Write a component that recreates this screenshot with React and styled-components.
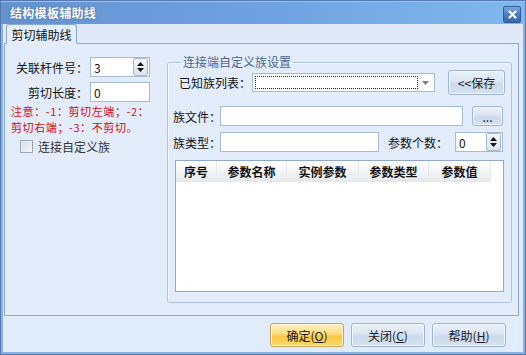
import React from 'react'
import styled, { createGlobalStyle } from 'styled-components'

const GlobalStyle = createGlobalStyle`
  html, body {
    margin: 0;
    padding: 0;
    background: #ffffff;
  }
  body {
    font-family: "Noto Sans CJK SC", "Liberation Sans", sans-serif;
    font-size: 12px;
    color: #111;
  }
`

const Window = styled.div`
  width: 526px;
  height: 355px;
  box-sizing: border-box;
  display: flex;
  flex-direction: column;
  border: 1px solid #5478b0;
  background: #dfe9f8;
`

const TitleBar = styled.div`
  height: 23px;
  display: flex;
  align-items: center;
  justify-content: space-between;
  padding: 0 4px 0 9px;
  background: linear-gradient(to right, #6592cf 0%, #6fa2df 50%, #80b8ee 100%);
  box-shadow: inset 0 1px 0 #9cc2ee;
`

const Title = styled.span`
  color: #ffffff;
  font-weight: bold;
  font-size: 12px;
  letter-spacing: 0.3px;
  text-shadow: 0 0 2px #3a5f95;
`

const CloseBtn = styled.div`
  width: 16px;
  height: 15px;
  margin-top: 4px;
  display: flex;
  align-items: center;
  justify-content: center;
  border: 1px solid #2f5d9b;
  border-radius: 2px;
  background: linear-gradient(to bottom, #7ea7dc 0%, #4d7cc0 50%, #3767ad 100%);
`

const Frame = styled.div`
  flex: 1;
  display: flex;
  flex-direction: column;
  border: 2px solid #8cb0e0;
  border-top: none;
  padding: 0 4px 0 1px;
  background: #dfe9f8;
`

const TabStrip = styled.div`
  height: 19px;
  display: flex;
  align-items: flex-end;
  padding-left: 2px;
`

const Tab = styled.div`
  width: 69px;
  height: 18px;
  margin-bottom: -1px;
  position: relative;
  z-index: 1;
  display: flex;
  align-items: center;
  justify-content: center;
  border: 1px solid #8aaad0;
  border-bottom-color: #e3edfb;
  border-radius: 3px 3px 0 0;
  background: #e3edfb;
  font-size: 12px;
`

const Panel = styled.div`
  height: 273px;
  box-sizing: border-box;
  display: flex;
  border: 1px solid #8aaad0;
  background: #e2ecfa;
`

const LeftPane = styled.div`
  width: 162px;
  padding-top: 13px;
  display: flex;
  flex-direction: column;
`

const FieldRow = styled.div`
  display: flex;
  align-items: center;
  height: 20px;
  margin-bottom: ${p => p.$gap || 0}px;
`

const Label = styled.span`
  width: ${p => p.$w}px;
  flex: none;
  text-align: ${p => (p.$right ? 'right' : 'left')};
  padding-right: ${p => (p.$right ? 2 : 0)}px;
  box-sizing: border-box;
  white-space: nowrap;
  margin-left: ${p => p.$ml || 0}px;
`

const TextBox = styled.div`
  width: ${p => p.$w}px;
  height: ${p => p.$h || 20}px;
  box-sizing: border-box;
  flex: none;
  display: flex;
  align-items: center;
  padding-left: 3px;
  border: 1px solid #a3bad9;
  background: #ffffff;
  font-size: 12px;
`

const SpinText = styled.span`
  flex: 1;
`

const SpinBtn = styled.div`
  width: 13px;
  height: 16px;
  margin-right: 1px;
  display: flex;
  align-items: center;
  justify-content: center;
  border: 1px solid #a8b8cc;
  border-radius: 2px;
  background: linear-gradient(to bottom, #f5f8fc, #dbe3ee);
`

const Note = styled.div`
  margin-top: 1px;
  padding-left: 6px;
  color: #d80c0c;
  font-size: 11px;
  line-height: 16px;
  letter-spacing: 0.6px;
  white-space: nowrap;
`

const CheckRow = styled.div`
  margin-top: 3px;
  padding-left: 15px;
  display: flex;
  align-items: center;
  gap: 5px;
  color: #333;
`

const CheckBox = styled.div`
  width: 11px;
  height: 11px;
  border: 1px solid #9aa7b8;
  background: linear-gradient(135deg, #d8dde5, #f6f7f9);
  box-shadow: inset 0 0 0 1px #eef0f4;
`

const GroupBox = styled.fieldset`
  flex: 1;
  margin: 11px 6px 12px 0;
  padding: 0 6px 8px 5px;
  border: 1px solid #aec4e2;
  border-radius: 3px;
  box-shadow: inset 1px 1px 0 #f4f8fe;
  min-width: 0;
`

const Legend = styled.legend`
  margin-left: 8px;
  padding: 0 2px;
  color: #4d6490;
  font-size: 12px;
  line-height: 14px;
`

const GroupBody = styled.div`
  display: flex;
  flex-direction: column;
`

const GroupRow = styled.div`
  display: flex;
  align-items: center;
  height: ${p => p.$h || 20}px;
  margin-top: ${p => p.$mt || 0}px;
  padding-left: ${p => p.$pl || 0}px;
`

const Combo = styled.div`
  width: 183px;
  height: 19px;
  box-sizing: border-box;
  display: flex;
  align-items: center;
  padding: 2px;
  border: 1px solid #a3bad9;
  background: #ffffff;
`

const FocusRect = styled.div`
  flex: 1;
  align-self: stretch;
  border: 1px dotted #222;
`

const DropArrow = styled.div`
  width: 14px;
  display: flex;
  justify-content: center;
`

const Btn = styled.div`
  width: ${p => p.$w}px;
  height: ${p => p.$h}px;
  box-sizing: border-box;
  flex: none;
  margin-left: ${p => p.$ml || 0}px;
  display: flex;
  align-items: center;
  justify-content: center;
  font-size: 12px;
  color: #1b1b1b;
  border: 1px solid ${p => (p.$primary ? '#c7a65a' : '#9fb5d2')};
  border-radius: 3px;
  background: ${p =>
    p.$primary
      ? 'linear-gradient(to bottom, #fff0c2 0%, #fddc83 45%, #f9c742 55%, #fbd76a 100%)'
      : 'linear-gradient(to bottom, #eaf1fa 0%, #dbe5f2 45%, #cbd9eb 55%, #d6e2f1 100%)'};
  box-shadow: inset 0 0 0 1px ${p => (p.$primary ? '#fff6d8' : '#f1f6fc')};
`

const Table = styled.div`
  width: 329px;
  height: 132px;
  box-sizing: border-box;
  margin: 8px 0 0 2px;
  border: 1px solid #8fa9cc;
  background: #ffffff;
`

const HeaderRow = styled.div`
  display: flex;
  height: 21px;
`

const HeadCell = styled.div`
  width: ${p => p.$w}px;
  box-sizing: border-box;
  display: flex;
  align-items: center;
  justify-content: center;
  font-weight: bold;
  font-size: 12px;
  border-right: 1px solid #e7eaee;
  background: linear-gradient(to bottom, #ffffff 0%, #f4f5f7 50%, #e4e7eb 100%);
`

const Footer = styled.div`
  flex: 1;
  display: flex;
  justify-content: flex-end;
  align-items: flex-start;
  gap: 7px;
  padding: 7px 13px 0 0;
  background: #e1ecfb;
`

const Arrows = () => (
  <svg width="9" height="12" viewBox="0 0 9 12">
    <path d="M4.5 1 L8 5 L1 5 Z" fill="#111" />
    <path d="M1 7 L8 7 L4.5 11 Z" fill="#111" />
  </svg>
)

function Spin({ value, w }) {
  return (
    <TextBox $w={w}>
      <SpinText>{value}</SpinText>
      <SpinBtn>
        <Arrows />
      </SpinBtn>
    </TextBox>
  )
}

const columns = [
  { title: '序号', w: 41 },
  { title: '参数名称', w: 70 },
  { title: '实例参数', w: 72 },
  { title: '参数类型', w: 70 },
  { title: '参数值', w: 62 },
]

export default function App() {
  return (
    <>
      <GlobalStyle />
      <Window>
        <TitleBar>
          <Title>结构模板辅助线</Title>
          <CloseBtn>
            <svg width="9" height="9" viewBox="0 0 9 9">
              <path d="M1.5 1.5 L7.5 7.5 M7.5 1.5 L1.5 7.5" stroke="#fff" strokeWidth="2.2" strokeLinecap="round" />
            </svg>
          </CloseBtn>
        </TitleBar>
        <Frame>
          <TabStrip>
            <Tab>剪切辅助线</Tab>
          </TabStrip>
          <Panel>
            <LeftPane>
              <FieldRow $gap={5}>
                <Label $w={85} $right>关联杆件号：</Label>
                <Spin value="3" w={60} />
              </FieldRow>
              <FieldRow>
                <Label $w={85} $right>剪切长度：</Label>
                <TextBox $w={60}>0</TextBox>
              </FieldRow>
              <Note>
                注意：-1：剪切左端；-2：
                <br />
                剪切右端；-3：不剪切。
              </Note>
              <CheckRow>
                <CheckBox />
                <span>连接自定义族</span>
              </CheckRow>
            </LeftPane>
            <GroupBox>
              <Legend>连接端自定义族设置</Legend>
              <GroupBody>
                <GroupRow $h={25} $mt={1} $pl={6}>
                  <Label $w={73}>已知族列表：</Label>
                  <Combo>
                    <FocusRect />
                    <DropArrow>
                      <svg width="7" height="4" viewBox="0 0 7 4">
                        <path d="M0 0 L7 0 L3.5 4 Z" fill="#6f7f95" />
                      </svg>
                    </DropArrow>
                  </Combo>
                  <Btn $w={57} $h={25} $ml={13}>&lt;&lt;保存</Btn>
                </GroupRow>
                <GroupRow $mt={11}>
                  <Label $w={47}>族文件：</Label>
                  <TextBox $w={243} />
                  <Btn $w={31} $h={20} $ml={9}>...</Btn>
                </GroupRow>
                <GroupRow $mt={6}>
                  <Label $w={47}>族类型：</Label>
                  <TextBox $w={159} />
                  <Label $w={67} $ml={9}>参数个数：</Label>
                  <Spin value="0" w={48} />
                </GroupRow>
                <Table>
                  <HeaderRow>
                    {columns.map(c => (
                      <HeadCell key={c.title} $w={c.w}>{c.title}</HeadCell>
                    ))}
                  </HeaderRow>
                </Table>
              </GroupBody>
            </GroupBox>
          </Panel>
          <Footer>
            <Btn $w={74} $h={24} $primary>确定(<u>O</u>)</Btn>
            <Btn $w={74} $h={24}>关闭(<u>C</u>)</Btn>
            <Btn $w={74} $h={24}>帮助(<u>H</u>)</Btn>
          </Footer>
        </Frame>
      </Window>
    </>
  )
}
